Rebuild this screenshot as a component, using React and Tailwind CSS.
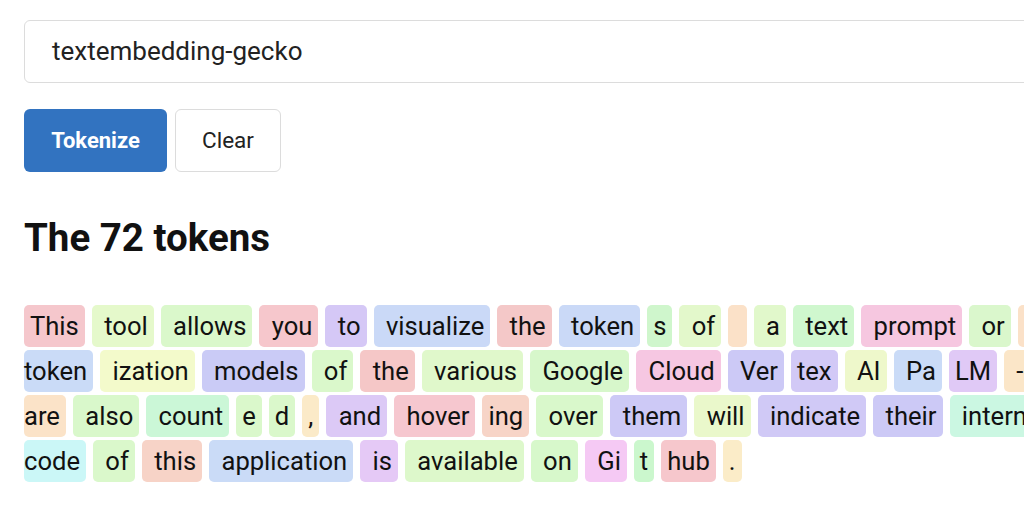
import React from "react";

const ROWS = [
  [
    ["This", "bg-[#f5c7cc]"],
    [" tool", "bg-[#e5f9cb]"],
    [" allows", "bg-[#daf8cb]"],
    [" you", "bg-[#f6c7cc]"],
    [" to", "bg-[#d5c8f6]"],
    [" visualize", "bg-[#cad9f7]"],
    [" the", "bg-[#f4c8c8]"],
    [" token", "bg-[#cad9f7]"],
    ["s", "bg-[#cff6cc]"],
    [" of", "bg-[#e3f8cb]"],
    [" ", "bg-[#fbe1c8]"],
    [" a", "bg-[#e1f8cb]"],
    [" text", "bg-[#cff7ce]"],
    [" prompt", "bg-[#f6c7e0]"],
    [" or", "bg-[#daf7cc]"],
    [" even", "bg-[#fbe1c8]"],
  ],
  [
    ["token", "bg-[#cadbf7]", true],
    [" ization", "bg-[#f3facb]"],
    [" models", "bg-[#cacbf6]"],
    [" of", "bg-[#daf8cb]"],
    [" the", "bg-[#f5c7c7]"],
    [" various", "bg-[#e0f8cb]"],
    [" Google", "bg-[#d7f7cb]"],
    [" Cloud", "bg-[#f6c7e2]"],
    [" Ver", "bg-[#ccc9f6]"],
    ["tex", "bg-[#d2c9f6]"],
    [" AI", "bg-[#eef8cb]"],
    [" Pa", "bg-[#cadbf7]"],
    ["LM", "bg-[#e0c9f6]"],
    [" -", "bg-[#fbe6c8]"],
    [" models", "bg-[#cadbf7]"],
  ],
  [
    ["are", "bg-[#fbe3c8]", true],
    [" also", "bg-[#d9f8cb]"],
    [" count", "bg-[#cbf7d7]"],
    ["e", "bg-[#daf8cb]"],
    ["d", "bg-[#daf8cb]"],
    [",", "bg-[#fbeac8]"],
    [" and", "bg-[#dcc9f6]"],
    [" hover", "bg-[#f6c7cf]"],
    ["ing", "bg-[#f7d4c7]"],
    [" over", "bg-[#d9f8cb]"],
    [" them", "bg-[#cdc9f6]"],
    [" will", "bg-[#eaf8cb]"],
    [" indicate", "bg-[#d0c9f6]"],
    [" their", "bg-[#ccc9f6]"],
    [" internal", "bg-[#cbf7e2]"],
  ],
  [
    ["code", "bg-[#cbf7f7]", true],
    [" of", "bg-[#daf8cb]"],
    [" this", "bg-[#f7d3c7]"],
    [" application", "bg-[#cadbf7]"],
    [" is", "bg-[#e5c9f6]"],
    [" available", "bg-[#ddf8cb]"],
    [" on", "bg-[#d7f8cb]"],
    [" Gi", "bg-[#f5c9f4]"],
    ["t", "bg-[#cbf7cd]"],
    ["hub", "bg-[#f6c7cc]"],
    [".", "bg-[#fbecc8]"],
  ],
];

function Token({ text, color, cont }) {
  return (
    <span
      className={`${color} ${cont ? "pl-0 pr-[6px]" : "px-[6px]"} h-[42px] leading-[42px] rounded-[5px] whitespace-pre shrink-0`}
    >
      {text}
    </span>
  );
}

export default function App() {
  return (
    <div className="w-[1024px] h-[512px] overflow-hidden bg-white text-[#111] font-['Roboto',sans-serif]">
      <div className="w-[1200px] pl-[24px] pt-[20px]">
        <div className="h-[63px] border border-[#dcdcdc] rounded-[6px] flex items-center pl-[27px] text-[26px] text-[#222]">
          textembedding-gecko
        </div>

        <div className="flex gap-[8px] mt-[26px]">
          <button className="w-[143px] h-[63px] rounded-[6px] bg-[#3273c0] text-white font-bold text-[22px]">
            Tokenize
          </button>
          <button className="w-[106px] h-[63px] rounded-[6px] bg-white border border-[#dcdcdc] text-[#222] text-[22.5px]">
            Clear
          </button>
        </div>

        <h2 className="mt-[44px] text-[38.5px] font-bold leading-[44px] text-[#111]">The 72 tokens</h2>

        <div className="mt-[45px] flex flex-col gap-[3px] text-[25.6px] text-[#111]">
          {ROWS.map((row, i) => (
            <div key={i} className="flex gap-[7px] whitespace-nowrap">
              {row.map(([t, c, cont], j) => (
                <Token key={j} text={t} color={c} cont={cont} />
              ))}
            </div>
          ))}
        </div>
      </div>
    </div>
  );
}
